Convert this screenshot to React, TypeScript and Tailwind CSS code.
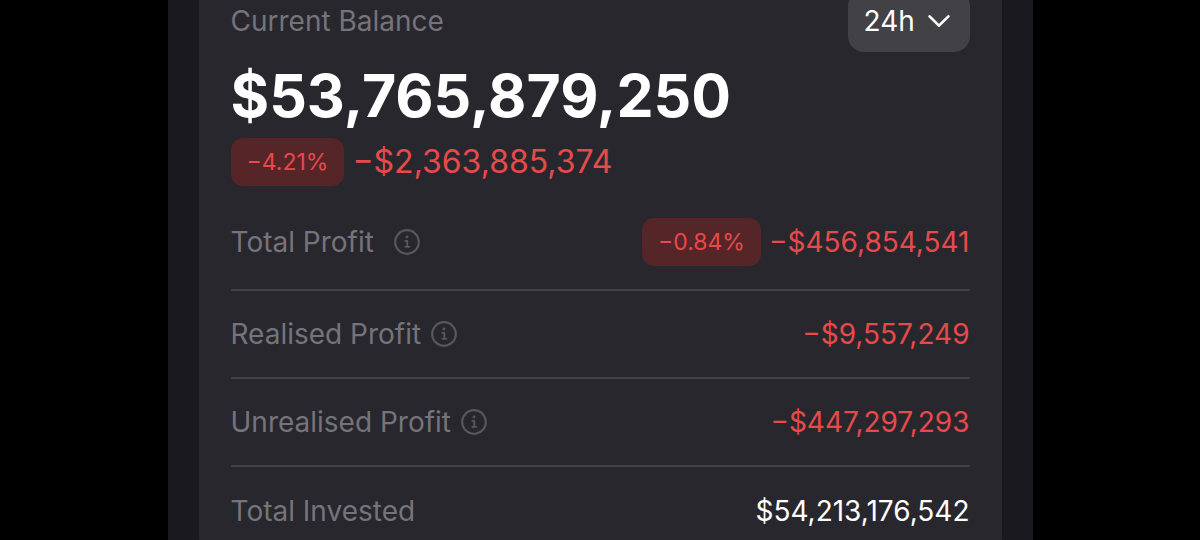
import type { ReactNode } from "react";

function InfoIcon() {
  return (
    <svg viewBox="0 0 26 26" className="size-[26px]" fill="none" stroke="currentColor" strokeLinecap="round" strokeLinejoin="round" aria-hidden="true">
      <circle cx="13" cy="13" r="11.8" strokeWidth="2.2" />
      <path d="M11.3 11.8h2v5.8M11.3 17.8h4" strokeWidth="1.8" />
      <circle cx="13" cy="8" r="1.4" fill="currentColor" stroke="none" />
    </svg>
  );
}

function InfoButton({ label }: { label: string }) {
  return (
    <button type="button" aria-label={`About ${label}`} className="text-[#57575d]">
      <InfoIcon />
    </button>
  );
}

function Badge({ children }: { children: ReactNode }) {
  return (
    <span className="flex h-12 items-center rounded-xl bg-[#552528] px-4 text-[23px] text-[#e84a4c]">{children}</span>
  );
}

type Stat = { label: string; value: string; info?: boolean; negative?: boolean };

const stats: Stat[] = [
  { label: "Realised Profit", value: "−$9,557,249", info: true, negative: true },
  { label: "Unrealised Profit", value: "−$447,297,293", info: true, negative: true },
  { label: "Total Invested", value: "$54,213,176,542" },
];

export default function App() {
  return (
    <div className="min-h-screen overflow-hidden bg-black font-['Inter',sans-serif]">
      <main className="mx-auto max-w-[865px] bg-[#1a191f] px-[31px]">
        <section className="-mt-2.5 rounded-b-2xl bg-[#28272d] px-8">
          <header className="flex h-[62px] items-center justify-between">
            <h1 className="text-[28px] leading-8 text-[#75747b]">Current Balance</h1>
            <div className="relative">
              <select aria-label="Period" defaultValue="24h" className="h-[62px] w-[122px] appearance-none rounded-2xl bg-[#424146] pl-4 text-[28px] text-white">
                <option>24h</option>
                <option>7d</option>
                <option>30d</option>
              </select>
              <svg viewBox="0 0 22 12" className="pointer-events-none absolute top-[25px] right-5 h-3 w-[22px]" fill="none" stroke="white" strokeWidth="2.6" strokeLinecap="round" strokeLinejoin="round" aria-hidden="true">
                <path d="M1.6 1.3 11 10.7l9.4-9.4" />
              </svg>
            </div>
          </header>
          <p className="mt-2 text-[59px] leading-[72px] font-bold text-white">$53,765,879,250</p>
          <div className="mt-1.5 flex items-center gap-2">
            <Badge>−4.21%</Badge>
            <span className="text-[32px] leading-10 text-[#e84a4c]">−$2,363,885,374</span>
          </div>
          <dl className="mt-2 text-[28px] leading-8">
            <div className="flex h-[97px] items-center justify-between border-b-2 border-[#424147]">
              <dt className="flex items-center gap-5 text-[#75747b]">
                Total Profit
                <InfoButton label="Total Profit" />
              </dt>
              <dd className="flex items-center gap-2 text-[#e84a4c]">
                <Badge>−0.84%</Badge>
                −$456,854,541
              </dd>
            </div>
            {stats.map((stat) => (
              <div key={stat.label} className="flex h-[88px] items-center justify-between border-b-2 border-[#424147] last:border-b-0">
                <dt className="flex items-center gap-2.5 text-[#75747b]">
                  {stat.label}
                  {stat.info && <InfoButton label={stat.label} />}
                </dt>
                <dd className={stat.negative ? "text-[#e84a4c]" : "text-white"}>{stat.value}</dd>
              </div>
            ))}
          </dl>
        </section>
      </main>
    </div>
  );
}
